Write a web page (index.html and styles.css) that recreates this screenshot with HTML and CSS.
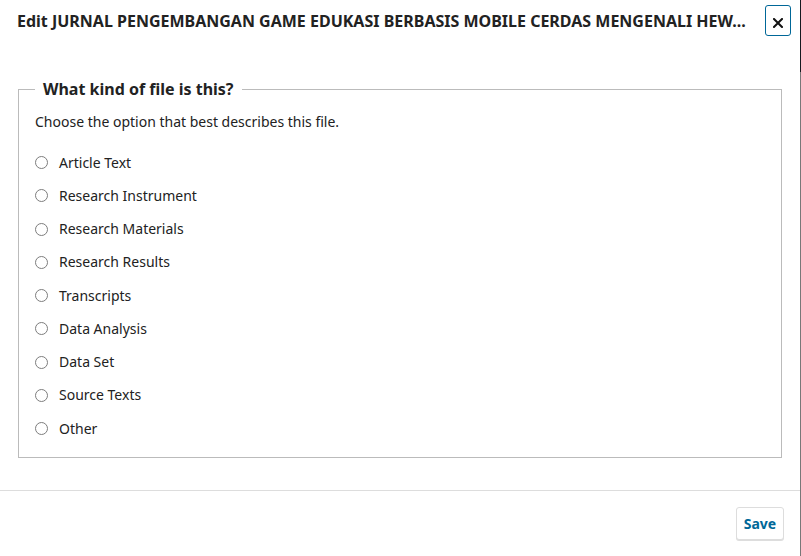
FILE: index.html
```html
<!DOCTYPE html>
<html lang="en">
<head>
<meta charset="utf-8">
<title>Edit file</title>
<link rel="stylesheet" href="styles.css">
</head>
<body>
<div class="page">
  <div class="modal">
    <header class="head">
      <h1 class="title">Edit JURNAL PENGEMBANGAN GAME EDUKASI BERBASIS MOBILE CERDAS MENGENALI HEW...</h1>
      <button class="close" aria-label="Close">
        <svg width="10" height="10" viewBox="0 0 10 10"><path d="M1 1L9 9M9 1L1 9" stroke="#111" stroke-width="2" stroke-linecap="square"/></svg>
      </button>
    </header>
    <div class="content">
      <fieldset class="group">
        <legend class="legend">What kind of file is this?</legend>
        <p class="desc">Choose the option that best describes this file.</p>
        <ul class="options">
          <li class="option"><input type="radio" name="kind" class="radio" id="k1"><label for="k1">Article Text</label></li>
          <li class="option"><input type="radio" name="kind" class="radio" id="k2"><label for="k2">Research Instrument</label></li>
          <li class="option"><input type="radio" name="kind" class="radio" id="k3"><label for="k3">Research Materials</label></li>
          <li class="option"><input type="radio" name="kind" class="radio" id="k4"><label for="k4">Research Results</label></li>
          <li class="option"><input type="radio" name="kind" class="radio" id="k5"><label for="k5">Transcripts</label></li>
          <li class="option"><input type="radio" name="kind" class="radio" id="k6"><label for="k6">Data Analysis</label></li>
          <li class="option"><input type="radio" name="kind" class="radio" id="k7"><label for="k7">Data Set</label></li>
          <li class="option"><input type="radio" name="kind" class="radio" id="k8"><label for="k8">Source Texts</label></li>
          <li class="option"><input type="radio" name="kind" class="radio" id="k9"><label for="k9">Other</label></li>
        </ul>
      </fieldset>
    </div>
    <footer class="foot">
      <button class="save">Save</button>
    </footer>
  </div>
  <div class="edge"></div>
</div>
</body>
</html>
```

FILE: styles.css
```css
* { box-sizing: border-box; }
html, body { margin: 0; padding: 0; background: #fff; }
body {
  font-family: "Noto Sans", "Open Sans", sans-serif;
  color: #222;
  font-size: 14px;
  line-height: 20px;
}
.page {
  display: flex;
  width: 801px;
  height: 556px;
  overflow: hidden;
}
.modal {
  width: 800px;
  height: 556px;
  display: flex;
  flex-direction: column;
  background: #fff;
}
.edge {
  width: 1px;
  height: 556px;
  background: linear-gradient(#151a1f 0, #151a1f 72px, #787878 72px, #787878 100%);
}
.head {
  display: flex;
  align-items: center;
  padding: 5px 9px 6px 17px;
  height: 42px;
}
.title {
  flex: 1;
  min-width: 0;
  margin: 0;
  font-size: 16px;
  font-weight: 700;
  line-height: 20px;
  white-space: nowrap;
  overflow: hidden;
  color: #222;
}
.close {
  width: 26px;
  height: 31px;
  padding: 4px 0 0;
  margin: 0;
  border: 1px solid #006798;
  border-radius: 3px;
  background: #fff;
  display: flex;
  align-items: center;
  justify-content: center;
  flex: none;
}
.close svg { display: block; }
.content {
  flex: 1;
  padding: 37px 18px 0;
}
.group {
  margin: 0;
  border: 1px solid #bbb;
  padding: 13px 16px 12px;
}
.legend {
  padding: 0 8px;
  font-size: 16px;
  font-weight: 700;
  line-height: 20px;
  color: #222;
}
.desc {
  margin: 0 0 14px;
  font-size: 14px;
  line-height: 20px;
}
.options {
  list-style: none;
  margin: 0;
  padding: 0;
}
.option {
  display: flex;
  align-items: center;
  height: 33.25px;
  gap: 11px;
}
.radio {
  appearance: none;
  -webkit-appearance: none;
  width: 13px;
  height: 13px;
  margin: 0;
  border: 1px solid #7d7d7d;
  border-radius: 50%;
  background: #fff;
  flex: none;
}
.foot {
  border-top: 1px solid #ddd;
  padding: 16px;
  display: flex;
  justify-content: flex-end;
}
.save {
  width: 48px;
  height: 33px;
  padding: 0;
  border: 1px solid #ddd;
  border-radius: 3px;
  box-shadow: 0 1px 0 #ddd;
  background: #fff;
  color: #006798;
  font-family: "Noto Sans", "Open Sans", sans-serif;
  font-size: 14px;
  font-weight: 700;
}
```
